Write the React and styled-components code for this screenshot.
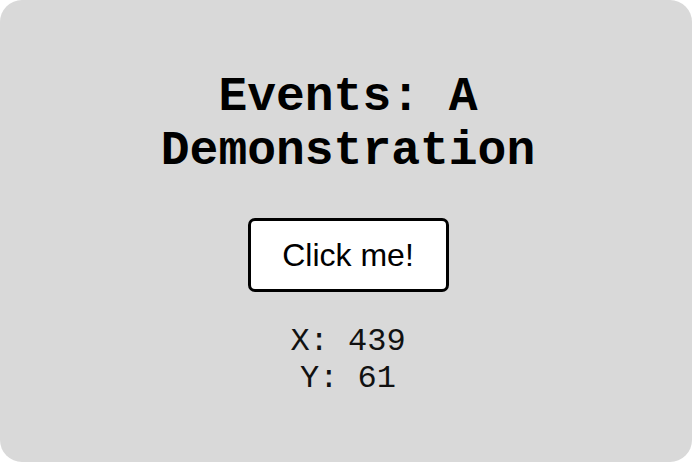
import React, { useState } from "react";
import styled, { createGlobalStyle } from "styled-components";

const Global = createGlobalStyle`
  html, body { margin: 0; padding: 0; background: #ffffff; }
  body { width: 692px; height: 462px; overflow: hidden; }
`;

const Panel = styled.div`
  box-sizing: border-box;
  width: 692px;
  height: 462px;
  background: #d9d9d9;
  border-radius: 22px;
  display: flex;
  flex-direction: column;
  align-items: center;
  padding-top: 70px;
  padding-left: 4px;
`;

const mono = `"Courier New", Courier, "Nimbus Mono PS", "FreeMono", "Liberation Mono", monospace`;

const Title = styled.h1`
  margin: 0;
  width: 420px;
  text-align: center;
  font-family: ${mono};
  font-weight: bold;
  font-size: 48px;
  line-height: 54px;
  color: #000;
`;

const Button = styled.button`
  margin-top: 40px;
  box-sizing: border-box;
  width: 201px;
  height: 74px;
  background: #ffffff;
  border: 3px solid #000;
  border-radius: 7px;
  font-family: "Liberation Sans", Arial, sans-serif;
  font-size: 32px;
  color: #000;
  cursor: pointer;
  padding: 0;
`;

const Coords = styled.div`
  margin-top: 31px;
  text-align: center;
  font-family: ${mono};
  font-size: 32px;
  line-height: 37px;
  color: #111;
`;

export default function App() {
  const [pos, setPos] = useState({ x: 439, y: 61 });
  return (
    <>
      <Global />
      <Panel>
        <Title>Events: A Demonstration</Title>
        <Button onClick={(e) => setPos({ x: e.clientX, y: e.clientY })}>Click me!</Button>
        <Coords>
          <div>X: {pos.x}</div>
          <div>Y: {pos.y}</div>
        </Coords>
      </Panel>
    </>
  );
}
